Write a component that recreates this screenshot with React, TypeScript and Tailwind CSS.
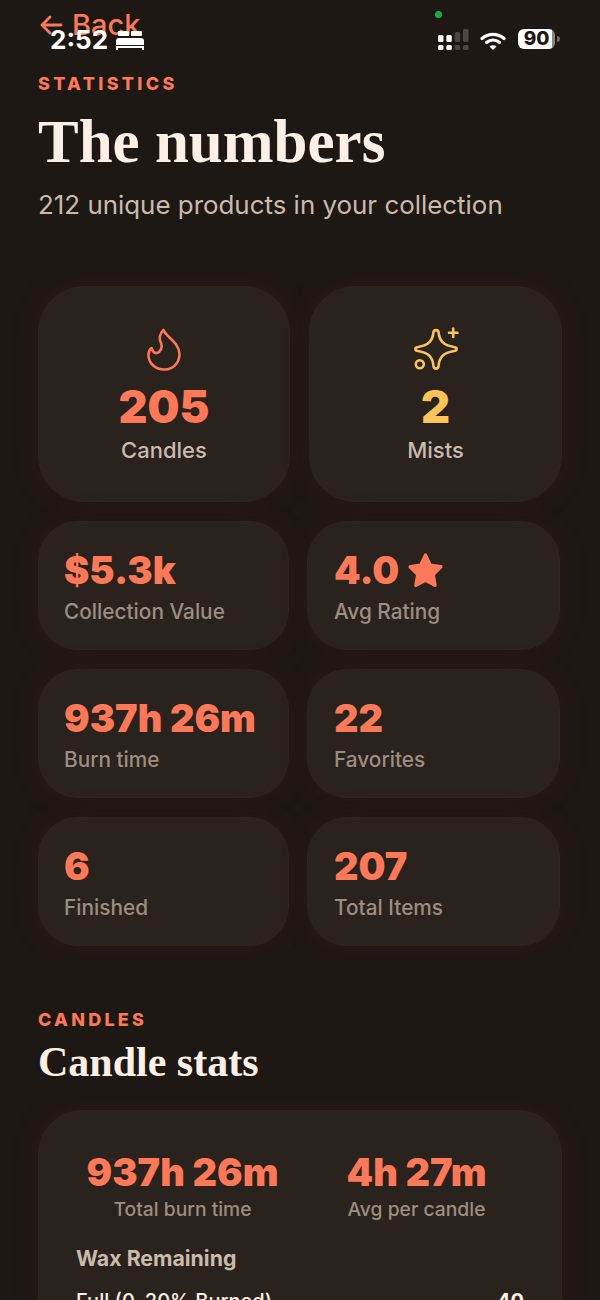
import React from "react";

const serif = "font-['Liberation_Serif',serif]";

function Small({ value, label, star }: { value: string; label: string; star?: boolean }) {
  return (
    <div className="h-[129px] rounded-[40px] bg-[#2a221c] border border-[#2d251f] pl-[26px] odd:pl-[25px] pt-[28px] shadow-[0_0_26px_rgba(70,28,22,0.3)]">
      <div className="flex items-center gap-[6px] h-[40px] text-[38px] leading-[40px] font-black text-[#fb7858]">
        <span>{value}</span>
        {star && (
          <svg width="41" height="41" viewBox="0 0 24 24" fill="#fb7858" stroke="#fb7858" strokeWidth="2" strokeLinejoin="round">
            <path d="M12 3l2.8 5.9 6.2.9-4.5 4.5 1.1 6.4L12 17.7l-5.6 3 1.1-6.4L3 9.800l6.200-.9z" />
          </svg>
        )}
      </div>
      <div className="mt-[9px] text-[20.800px] leading-[26px] font-medium text-[#9c8e82]">{label}</div>
    </div>
  );
}

function Big({ value, label, color, icon }: { value: string; label: string; color: string; icon: React.ReactNode }) {
  return (
    <div className="h-[216px] rounded-[46px] bg-[#2a221c] border border-[#2d251f] flex flex-col items-center pt-[40px] shadow-[0_0_26px_rgba(70,28,22,0.3)]">
      <div className="h-[44px] flex items-center justify-center">{icon}</div>
      <div className={`mt-[12px] text-[45px] leading-[48px] font-black ${color}`}>{value}</div>
      <div className="mt-[4px] text-[22px] leading-[30px] font-medium text-[#c9bbae]">{label}</div>
    </div>
  );
}

export default function App() {
  return (
    <div className="relative w-[600px] h-[1300px] overflow-hidden bg-[#1e1815] font-['Inter',sans-serif]">
      {/* Back link lies under the status bar */}
      <div className="absolute left-[39px] top-[7px] flex items-center gap-[9px] text-[#fb7858] text-[29px] leading-[36px] font-medium">
        <svg width="24" height="24" viewBox="0 0 24 24" fill="none" stroke="#fb7858" strokeWidth="2.8" strokeLinecap="round" strokeLinejoin="round">
          <path d="M22 12H3M11 4l-8 8 8 8" />
        </svg>
        <span>Back</span>
      </div>

      {/* Status bar overlay */}
      <div className="absolute left-[50px] top-[24px] flex items-center gap-[8px] text-white text-[26px] leading-[32px] font-bold">
        <span>2:52</span>
        <svg width="28" height="19" viewBox="0 0 28 19" fill="white">
          <path d="M3 0h9a1 1 0 0 1 1 1v4H3a1 1 0 0 1-1-1V1a1 1 0 0 1 1-1zM16 0h9a1 1 0 0 1 1 1v3a1 1 0 0 1-1 1H15V1a1 1 0 0 1 1-1z" />
          <path d="M3 7h22a3 3 0 0 1 3 3v4H0v-4a3 3 0 0 1 3-3zM0 15h28v4h-2v-2H2v2H0z" />
        </svg>
      </div>
      <div className="absolute left-[435px] top-[11px] w-[7px] h-[7px] rounded-full bg-[#22a846]" />
      <div className="absolute left-[438px] top-[29px] flex items-start">
        <svg width="32" height="22" viewBox="0 0 32 22">
          <g fill="white">
            <rect x="0" y="6" width="5.5" height="7" rx="1.5" />
            <rect x="8.300" y="6" width="5.5" height="7" rx="1.5" />
            <rect x="0" y="16" width="5.5" height="5" rx="1.5" />
            <rect x="8.300" y="16" width="5.5" height="5" rx="1.5" />
          </g>
          <g fill="#4a4643">
            <rect x="16.600" y="3" width="5.5" height="10" rx="1.5" />
            <rect x="25" y="0" width="5.5" height="13" rx="1.5" />
            <rect x="16.600" y="16" width="5.5" height="5" rx="1.5" />
            <rect x="25" y="16" width="5.5" height="5" rx="1.5" />
          </g>
        </svg>
        <svg className="ml-[10px] mt-[3px]" width="26" height="18" viewBox="0 0 26 18" fill="none" stroke="white" strokeWidth="3.2" strokeLinecap="round">
          <path d="M2 6.500c6.500-5.500 15.500-5.500 22 0" />
          <path d="M6.500 10.500c4-3.300 9-3.300 13 0" />
          <path d="M13 18l-3.500-3.600c2-1.600 5-1.600 7 0z" fill="white" stroke="none" />
        </svg>
        <div className="ml-[12px] w-[37px] h-[20px] rounded-[6px] bg-[linear-gradient(90deg,#fff_92%,#8a8683_92%)] flex items-center justify-center text-[#1e1815] text-[19px] leading-[20px] font-extrabold">90</div>
        <div className="ml-[2px] mt-[7px] w-[3px] h-[6px] rounded-r-full bg-[#6e6a66]" />
      </div>

      <main className="px-[38px] pt-[73px]">
        <div className="text-[18px] leading-[22px] font-extrabold tracking-[0.185em] text-[#fb7858]">STATISTICS</div>
        <h1 className={`${serif} mt-[15px] text-[61px] leading-[64px] font-bold text-[#fbefe6]`}>The numbers</h1>
        <p className="mt-[15px] text-[25.900px] leading-[32px] text-[#c9bbae]">212 unique products in your collection</p>

        <div className="mt-[65px] grid grid-cols-[252px_253px] gap-[19px]">
          <Big
            value="205"
            label="Candles"
            color="text-[#fb7858]"
            icon={
              <svg width="36" height="44" viewBox="0 0 36 44" fill="none" stroke="#fb7858" strokeWidth="2.600" strokeLinejoin="round">
                <path d="M17.500 3C20 10 33 15 33.500 27C33.500 36 27 42.500 18.500 42.500C9 42.500 2.500 36 2.500 28C2.500 25 3.500 22.500 5.500 21C6.500 24 8.500 26.500 11 26C14.500 25 17 20 15 16C13 12.500 13 7 17.500 3Z" />
              </svg>
            }
          />
          <Big
            value="2"
            label="Mists"
            color="text-[#fbc45a]"
            icon={
              <svg width="46" height="44" viewBox="0 0 46 44" fill="none" stroke="#fbc45a" strokeWidth="2.600" strokeLinecap="round" strokeLinejoin="round">
                <path d="M20.500 5C21 2.500 25 2.500 25.500 5C26.500 14 30 18 41 20C44.500 20.500 44.500 23.500 41 24C30 26 26.500 30 25.500 39C25 42.500 21 42.500 20.500 39C19.500 30 16 26 5 24C1.500 23.500 1.500 20.500 5 20C16 18 19.500 14 20.500 5Z" />
                <circle cx="6.800" cy="37.300" r="4" />
                <path d="M36 5.700h8.500M40.200 1.500v8.500" />
              </svg>
            }
          />
        </div>

        <div className="mt-[19px] grid grid-cols-[251px_253px] gap-x-[18px] gap-y-[19px]">
          <Small value="$5.3k" label="Collection Value" />
          <Small value="4.0" label="Avg Rating" star />
          <Small value="937h 26m" label="Burn time" />
          <Small value="22" label="Favorites" />
          <Small value="6" label="Finished" />
          <Small value="207" label="Total Items" />
        </div>

        <div className="mt-[63px] text-[18px] leading-[22px] font-extrabold tracking-[0.18em] text-[#fb7858]">CANDLES</div>
        <h2 className={`${serif} mt-[8px] text-[42px] leading-[46px] font-bold text-[#fbefe6]`}>Candle stats</h2>

        <section className="mt-[25px] rounded-t-[44px] bg-[#2a221c] border border-[#2d251f] h-[300px] px-[37px] pt-[38px] shadow-[0_0_26px_rgba(70,28,22,0.3)]">
          <div className="flex -ml-[1px]">
            <div className="w-[215px] flex flex-col items-center">
              <div className="text-[38px] leading-[46px] font-black text-[#fb7858]">937h 26m</div>
              <div className="mt-[1px] text-[19.300px] leading-[26px] font-medium text-[#9c8e82]">Total burn time</div>
            </div>
            <div className="ml-[19px] w-[215px] flex flex-col items-center">
              <div className="text-[38px] leading-[46px] font-black text-[#fb7858]">4h 27m</div>
              <div className="mt-[1px] text-[19.300px] leading-[26px] font-medium text-[#9c8e82]">Avg per candle</div>
            </div>
          </div>
          <div className="mt-[22px] text-[21.300px] leading-[28px] font-bold text-[#c9bbae]">Wax Remaining</div>
          <div className="mt-[16px] flex justify-between text-[20px] leading-[26px] font-medium text-[#fbefe6]">
            <span>Full (0–20% Burned)</span>
            <span className="font-bold">40</span>
          </div>
        </section>
      </main>
    </div>
  );
}
